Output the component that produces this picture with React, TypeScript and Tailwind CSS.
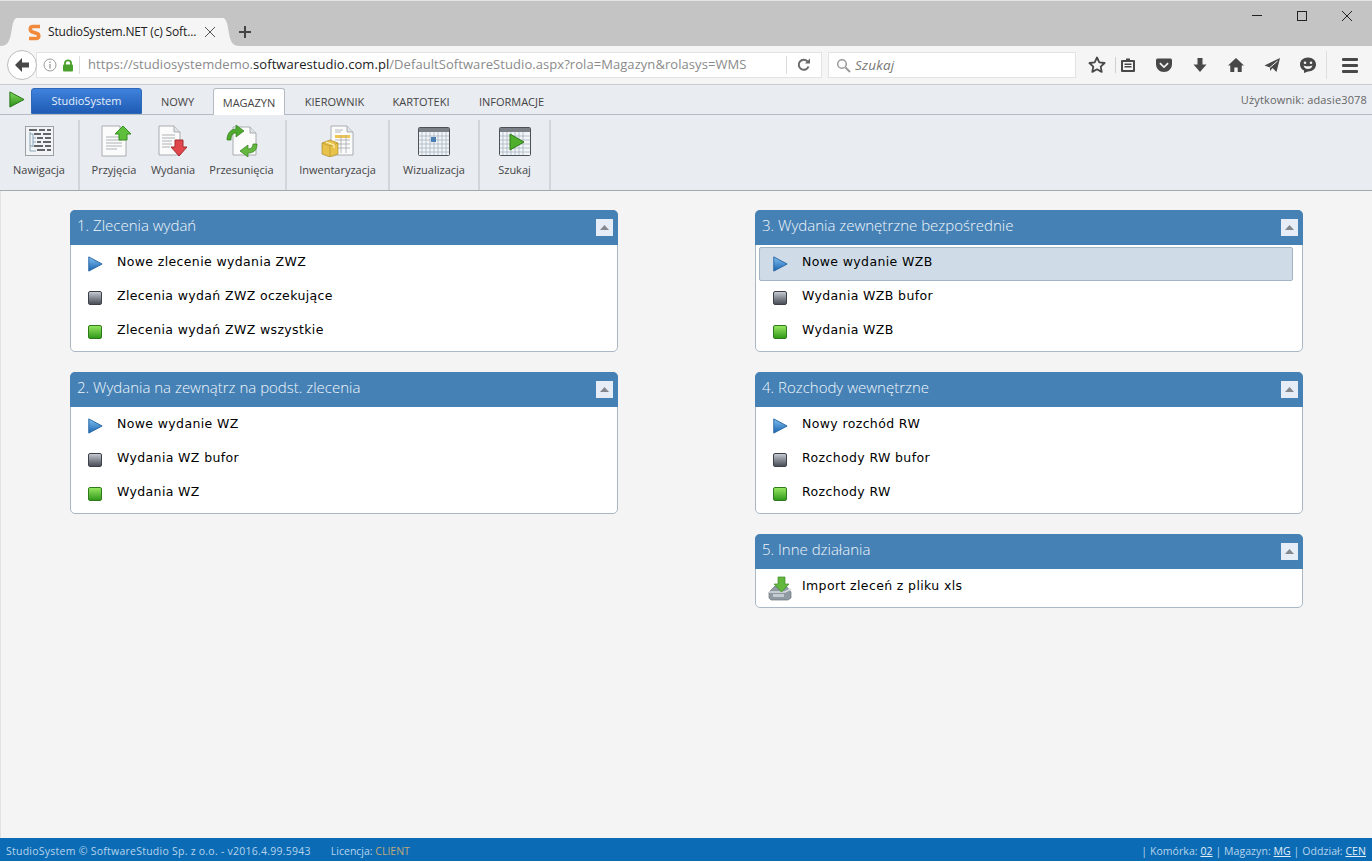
import React, { useId } from "react";

const SEGOE = "font-['Open_Sans','Noto_Sans',sans-serif]";
const VERDANA = "font-['DejaVu_Sans','Liberation_Sans',sans-serif]";

function PlayIcon({ from, to, edge, size = 18 }: { from: string; to: string; edge: string; size?: number }) {
  const id = useId();
  return (
    <svg width={size} height={size} viewBox="0 0 18 18">
      <defs>
        <linearGradient id={id} x1="0" y1="0" x2="0" y2="1">
          <stop offset="0" stopColor={from} />
          <stop offset="1" stopColor={to} />
        </linearGradient>
      </defs>
      <path d="M2 1 17 9 2 17Z" fill={`url(#${id})`} stroke={edge} strokeWidth="1" strokeLinejoin="round" />
    </svg>
  );
}

function ItemIcon({ kind }: { kind: string }) {
  if (kind === "play") return <PlayIcon from="#7fc0f2" to="#1b64ad" edge="#1f5f9f" size={16} />;
  if (kind === "wait") {
    return <div className="w-[14px] h-[14px] rounded-[2px] border border-[#3d4046] bg-gradient-to-b from-[#c5cad2] to-[#4b4f57]" />;
  }
  if (kind === "done") {
    return <div className="w-[14px] h-[14px] rounded-[2px] border border-[#2f7a1a] bg-gradient-to-b from-[#93e65e] to-[#2f9a18]" />;
  }
  return (
    <svg width="26" height="26" viewBox="0 0 26 26">
      <path d="M2 17 8 11H19L24 17V23L21 25H4L2 23Z" fill="#8f9aa3" stroke="#6d767e" strokeWidth=".7" />
      <path d="M2 17H18L24 14" fill="none" stroke="#d8dee2" strokeWidth="1.4" />
      <path d="M6 19H17V22H6Z" fill="#c3cbd1" />
      <path d="M11 2H18V9H22L14.5 17 7 9H11Z" fill="#62b83c" stroke="#3d8a22" strokeWidth=".7" />
    </svg>
  );
}

function Panel({ title, items }: { title: string; items: { label: string; icon: string; active?: boolean }[] }) {
  return (
    <section className="w-[548px] rounded-[5px] border border-[#aab8c6] bg-white">
      <header className={`${SEGOE} h-[35px] -mx-px -mt-px rounded-t-[5px] bg-[#4581b4] pl-[7px] pr-[5px] flex items-center justify-between`}>
        <span className="text-[15px] font-light text-[#f0f6fc] pb-[5px]">{title}</span>
        <button className="w-[17px] h-[17px] bg-[#e7edf6] flex items-center justify-center">
          <svg width="9" height="5" viewBox="0 0 9 5"><path d="M4.5 0 9 5H0Z" fill="#84878c" /></svg>
        </button>
      </header>
      <div className="pt-[2px] pb-[2px]">
        {items.map((item) => (
          <div
            key={item.label}
            className={`h-[34px] flex items-start ml-[3px] mr-[9px] rounded-[2px] border ${
              item.active ? "border-[#a3b4c4] bg-[#cfdce8]" : "border-transparent"
            }`}
          >
            <div className="w-[38px] h-full flex items-center justify-center pl-[1px]">
              <ItemIcon kind={item.icon} />
            </div>
            <span className={`${VERDANA} ml-[4px] text-[12.5px] tracking-[0.37px] text-black leading-[28px]`}>{item.label}</span>
          </div>
        ))}
      </div>
    </section>
  );
}

function SheetBase() {
  return (
    <>
      <path d="M3 1H21L27 7V31H3Z" fill="#fbfbfb" stroke="#a9adb1" />
      <path d="M21 1V7H27" fill="#e0e3e6" stroke="#a9adb1" />
      <path d="M7 12H23M7 15H23M7 18H23M7 21H23M7 24H18" stroke="#a4a8ad" strokeWidth=".9" />
    </>
  );
}

function RibbonIcon({ kind }: { kind: string }) {
  if (kind === "nav") {
    return (
      <svg width="30" height="32" viewBox="-1 0 30 32">
        <rect x=".5" y="1.5" width="28" height="29" fill="#f1f3f4" stroke="#9aa0a5" />
        <path d="M4 5H12M14 5H20M22 5H26M9 9H16M18 9H26M12 13H18M20 13H26M12 17H16M18 17H26M9 21H18M20 21H26M12 25H20M22 25H26" stroke="#33373b" strokeWidth="1.600" />
        <path d="M5 7V26M5 9H8M8 9V22M8 13H11M8 17H11M5 21H8M5 26H11" stroke="#6f94b0" strokeWidth=".8" fill="none" />
      </svg>
    );
  }
  if (kind === "in") {
    return (
      <svg width="34" height="32" viewBox="-2 0 34 32">
        <SheetBase />
        <path d="M24 1 32 9H28V15H20V9H16Z" fill="#5fbf3c" stroke="#358f1e" strokeLinejoin="round" />
      </svg>
    );
  }
  if (kind === "out") {
    return (
      <svg width="30" height="32" viewBox="0 0 30 32">
        <path d="M1 1H16L22 7V30H1Z" fill="#fbfbfb" stroke="#a9adb1" />
        <path d="M16 1V7H22" fill="#e0e3e6" stroke="#a9adb1" />
        <path d="M4 10H17M4 13H17M4 16H14M4 19H14M4 22H12" stroke="#a4a8ad" strokeWidth=".9" />
        <path d="M17 15H25V22H29L21 31 13 22H17Z" fill="#e0474c" stroke="#a82a2e" strokeLinejoin="round" />
      </svg>
    );
  }
  if (kind === "move") {
    return (
      <svg width="32" height="32" viewBox="0 0 32 32">
        <path d="M7 2H24L30 8V30H7Z" fill="#fbfbfb" stroke="#a9adb1" />
        <path d="M24 2V8H30" fill="#e0e3e6" stroke="#a9adb1" />
        <path d="M1 15C1 8 5 4 10 4V0L18 6 10 12V8C7 8 5 10 5 15Z" fill="#4fa92e" stroke="#2f7d1a" strokeWidth=".7" />
        <path d="M31 19C31 26 27 28 22 28V32L14 26 22 20V24C25 24 27 22 27 19Z" fill="#64b83f" stroke="#2f7d1a" strokeWidth=".7" />
      </svg>
    );
  }
  if (kind === "stock") {
    return (
      <svg width="34" height="32" viewBox="0 0 34 32">
        <path d="M10 1H26L32 7V30H10Z" fill="#fbfbfb" stroke="#a9adb1" />
        <path d="M26 1V7H32" fill="#e0e3e6" stroke="#a9adb1" />
        <rect x="14" y="10" width="15" height="3" fill="#f0c64f" />
        <path d="M14 15H29M14 19H29M14 23H29M20 10V28M25 10V28M14 5H22M14 7H20" stroke="#a4a8ad" strokeWidth=".8" />
        <path d="M1 18 9 15 17 18V29L9 32 1 29Z" fill="#e8c24a" stroke="#a8892a" strokeWidth=".7" />
        <path d="M1 18 9 21 17 18M9 21V32" fill="none" stroke="#b89a3a" strokeWidth=".8" />
        <path d="M5 17 13 20V23" fill="none" stroke="#fff2b8" strokeWidth="1.2" />
      </svg>
    );
  }
  const isGrid = kind === "grid";
  const cols = isGrid ? 7 : 6;
  return (
    <svg width="32" height="29" viewBox="0 0 32 29" className="mt-[2px]">
      <rect x=".5" y=".5" width="31" height="28" rx="1" fill="#f2f5f7" stroke="#4c5257" />
      <rect x="1" y="1" width="30" height="4" fill="#7a8086" />
      {Array.from({ length: cols }, (_, i) => (
        <path key={`v${i}`} d={`M${4 + i * 4} 5V28`} stroke="#a7b4c0" strokeWidth=".8" />
      ))}
      {[9, 13, 17, 21, 25].map((y) => (
        <path key={y} d={`M1 ${y}H31`} stroke="#a7b4c0" strokeWidth=".8" />
      ))}
      {isGrid ? (
        <rect x="13" y="10" width="5" height="5" fill="#4a7fb5" />
      ) : (
        <path d="M11 7 25 15 11 23Z" fill="#4fae2e" stroke="#2d7a17" strokeLinejoin="round" />
      )}
    </svg>
  );
}

function RibbonItem({ label, icon, width }: { label: string; icon: string; width: string }) {
  return (
    <div className={`${width} h-full flex flex-col items-center`}>
      <div className="h-[37px] pt-[5px] flex items-start justify-center">
        <RibbonIcon kind={icon} />
      </div>
      <span className="mt-[5px] text-[11px] leading-[15px] text-[#454545] whitespace-nowrap">{label}</span>
    </div>
  );
}

function Divider() {
  return <div className="w-[2px] h-full bg-[#d2d5d9]" />;
}

function ToolIcon({ children, w = 20 }: { children: React.ReactNode; w?: number }) {
  return (
    <svg width={w} height="20" viewBox="0 0 20 20" fill="#484848">
      {children}
    </svg>
  );
}

export default function App() {
  return (
    <div className={`${SEGOE} w-[1372px] h-[862px] overflow-hidden flex flex-col bg-white`}>
      {/* Title bar and tab */}
      <div className="h-[46px] shrink-0 bg-[#c4c4c4] border-t border-[#e4e4e4] flex items-end relative">
        <svg width="17" height="28" viewBox="0 0 17 28" className="shrink-0">
          <path d="M0 28C9 28 10 22 12 10 13 3 15 0 17 0V28Z" fill="#f5f5f5" />
        </svg>
        <div className="w-[206px] h-[28px] bg-[#f5f5f5] flex items-center pl-[11px] relative">
          <svg width="13" height="17" viewBox="0 0 13 17">
            <path d="M12 2.500H5C1.500 2.500 1.500 7 4.500 8L9 9.500C11.500 10.500 11.500 14.500 8 14.500H1" fill="none" stroke="#f08a3c" strokeWidth="3.600" />
          </svg>
          <span className="ml-[7px] text-[12px] text-[#222] tracking-[-0.15px] whitespace-nowrap">StudioSystem.NET (c) Soft...</span>
          <svg width="12" height="12" viewBox="0 0 12 12" className="ml-auto mr-[7px]">
            <path d="M1 1 11 11M11 1 1 11" stroke="#555" strokeWidth="1" />
          </svg>
        </div>
        <svg width="17" height="28" viewBox="0 0 17 28" className="shrink-0 -scale-x-100">
          <path d="M0 28C9 28 10 22 12 10 13 3 15 0 17 0V28Z" fill="#f5f5f5" />
        </svg>
        <svg width="14" height="14" viewBox="0 0 14 14" className="ml-[-2px] mb-[7px]">
          <path d="M7 1V13M1 7H13" stroke="#444" strokeWidth="2" />
        </svg>
        <div className="absolute right-[3px] top-0 w-[135px] h-[30px] flex">
          <div className="w-[45px] flex items-center justify-center pb-[1px]">
            <div className="w-[10px] h-px bg-[#222]" />
          </div>
          <div className="w-[45px] flex items-center justify-center">
            <div className="w-[10px] h-[10px] border border-[#222]" />
          </div>
          <div className="w-[45px] flex items-center justify-center">
            <svg width="10" height="10" viewBox="0 0 10 10"><path d="M0 0 10 10M10 0 0 10" stroke="#222" /></svg>
          </div>
        </div>
      </div>

      {/* Navigation bar */}
      <div className="h-[39px] shrink-0 bg-[#f5f5f5] border-b border-[#c9cbcd] flex items-center pl-[7px] relative">
        <div className="w-[30px] h-[30px] rounded-full border border-[#bdbdbd] bg-white flex items-center justify-center z-10 shrink-0">
          <svg width="15" height="14" viewBox="0 0 15 14"><path d="M7 0 0 7 7 14V9.500H14V4.500H7Z" fill="#474747" /></svg>
        </div>
        <div className="h-[26px] w-[786px] -ml-px bg-white border border-[#e3e3e3] flex items-center shrink-0">
          <svg width="14" height="14" viewBox="0 0 14 14" className="ml-[6px]">
            <circle cx="7" cy="7" r="6" fill="none" stroke="#9a9a9a" />
            <path d="M7 6V10.500M7 3.500V5" stroke="#9a9a9a" strokeWidth="1.300" />
          </svg>
          <svg width="12" height="13" viewBox="0 0 12 13" className="ml-[5px]">
            <path d="M3 6V4C3 .5 9 .5 9 4V6" fill="none" stroke="#4aa02c" strokeWidth="1.800" />
            <rect x="1" y="5.500" width="10" height="7" rx="1" fill="#4aa02c" />
          </svg>
          <div className="w-px h-[18px] bg-[#dcdcdc] ml-[5px]" />
          <span className="ml-[8px] text-[13px] text-[#8a8a8a] tracking-[0.06px] whitespace-nowrap">
            https://studiosystemdemo.<span className="text-[#1a1a1a]">softwarestudio.com.pl</span>/DefaultSoftwareStudio.aspx?rola=Magazyn&amp;rolasys=WMS
          </span>
          <div className="ml-auto w-px h-[18px] bg-[#dcdcdc]" />
          <div className="w-[34px] flex justify-center">
            <svg width="14" height="14" viewBox="0 0 14 14">
              <path d="M11.500 8.500A5 5 0 1 1 10.500 3.500" fill="none" stroke="#6a6a6a" strokeWidth="2" />
              <path d="M8 5.500H13V.5Z" fill="#6a6a6a" />
            </svg>
          </div>
        </div>
        <div className="ml-[6px] h-[26px] w-[248px] bg-white border border-[#e3e3e3] flex items-center pl-[7px] shrink-0">
          <svg width="15" height="15" viewBox="0 0 15 15">
            <circle cx="6" cy="6" r="4.300" fill="none" stroke="#9a9a9a" strokeWidth="1.500" />
            <path d="M9.500 9.500 14 14" stroke="#9a9a9a" strokeWidth="2" />
          </svg>
          <span className="ml-[4px] text-[13.5px] italic text-[#777] tracking-[0.2px]">Szukaj</span>
        </div>

        <div className="flex items-center ml-[11px]">
          <ToolIcon>
            <path d="M10 2.500 12.300 7.400 17.600 8 13.700 11.600 14.700 16.900 10 14.300 5.300 16.900 6.300 11.600 2.400 8 7.700 7.400Z" fill="none" stroke="#484848" strokeWidth="1.800" strokeLinejoin="round" />
          </ToolIcon>
          <div className="w-px h-[16px] bg-[#d0d0d0] ml-[8px] mr-[5px]" />
          <div className="-ml-[3px] flex items-center">
            <ToolIcon>
              <path fillRule="evenodd" d="M4 5H8V3.500H12V5H16A1 1 0 0 1 17 6V16A1 1 0 0 1 16 17H4A1 1 0 0 1 3 16V6A1 1 0 0 1 4 5ZM5 7V15H15V7ZM6.500 8.500H13.500V10H6.500ZM6.500 11H13.500V12.500H6.500Z" />
            </ToolIcon>
          </div>
          <div className="ml-[16px]">
            <ToolIcon>
              <path fillRule="evenodd" d="M3.500 3.500H16.500A1.500 1.500 0 0 1 18 5V9C18 13.500 14.500 17 10 17S2 13.500 2 9V5A1.500 1.500 0 0 1 3.500 3.500ZM6.500 7.500 5.300 8.700 10 13.300 14.700 8.700 13.500 7.500 10 11Z" />
            </ToolIcon>
          </div>
          <div className="ml-[16px]">
            <ToolIcon>
              <path d="M7.500 3H12.500V9.500H16.500L10 17 3.500 9.500H7.500Z" />
            </ToolIcon>
          </div>
          <div className="ml-[16px]">
            <ToolIcon>
              <path d="M10 3 18 10.500H15.700V17H11.700V12.500H8.300V17H4.300V10.500H2Z" />
            </ToolIcon>
          </div>
          <div className="ml-[16px]">
            <ToolIcon>
              <path d="M18 3 14.500 17 10.500 13 8 16V12.500L2.500 10.500Z" />
              <path d="M8 12.500 15.500 6" stroke="#f5f5f5" strokeWidth="1" fill="none" />
            </ToolIcon>
          </div>
          <div className="ml-[16px]">
            <ToolIcon>
              <path fillRule="evenodd" d="M10 2.500C14.700 2.500 18 5.500 18 9.500S14.700 16.500 10 16.500L6 18V15.500C3.500 14.300 2 12 2 9.500 2 5.500 5.300 2.500 10 2.500ZM7 6.500A1.300 1.300 0 1 0 7 9.100 1.300 1.300 0 0 0 7 6.500ZM13 6.500A1.300 1.300 0 1 0 13 9.100 1.300 1.300 0 0 0 13 6.500ZM5.500 10.500C6 13 8 14 10 14S14 13 14.500 10.500C13 11.500 7 11.500 5.500 10.500Z" />
            </ToolIcon>
          </div>
          <div className="w-px h-[28px] bg-[#dedede] ml-[8px]" />
          <div className="ml-[15px] flex flex-col gap-[3px]">
            <div className="w-[16px] h-[3px] rounded-[1px] bg-[#484848]" />
            <div className="w-[16px] h-[3px] rounded-[1px] bg-[#484848]" />
            <div className="w-[16px] h-[3px] rounded-[1px] bg-[#484848]" />
          </div>
        </div>
      </div>

      {/* Tab row */}
      <div className="h-[30px] shrink-0 bg-[#e9ecf1] border-b border-[#b4bbc4] flex items-end relative text-[11px] text-[#444]">
        <div className="w-[31px] h-full flex items-center pl-[8px]">
          <PlayIcon from="#82d85a" to="#2c8f18" edge="#1f6f12" size={17} />
        </div>
        <div className="w-[111px] h-[26px] pt-[1px] rounded-t-[3px] border border-[#2e68b8] bg-gradient-to-b from-[#3f82dc] to-[#1f5cb4] text-[#e6f0fb] flex items-center justify-center">StudioSystem</div>
        <div className="w-[71px] h-[26px] pt-[2px] flex items-center justify-center">NOWY</div>
        <div className="w-[72px] h-[27px] pt-[2px] -mb-px rounded-t-[3px] border border-b-0 border-[#b4bbc4] bg-white flex items-center justify-center">MAGAZYN</div>
        <div className="w-[99px] h-[26px] pt-[2px] flex items-center justify-center">KIEROWNIK</div>
        <div className="w-[74px] h-[26px] pt-[2px] flex items-center justify-center">KARTOTEKI</div>
        <div className="w-[107px] h-[26px] pt-[2px] flex items-center justify-center">INFORMACJE</div>
        <span className="ml-auto mr-[5px] mb-[6px] text-[#666] text-[11px] tracking-[0.15px]">Użytkownik: adasie3078</span>
      </div>

      {/* Ribbon */}
      <div className="h-[76px] shrink-0 bg-[#e9ecf1] border-b border-[#a3a8ae] flex pt-[5px]">
        <RibbonItem label="Nawigacja" icon="nav" width="w-[78px]" />
        <Divider />
        <div className="w-[4px]" />
        <RibbonItem label="Przyjęcia" icon="in" width="w-[60px]" />
        <RibbonItem label="Wydania" icon="out" width="w-[58px]" />
        <RibbonItem label="Przesunięcia" icon="move" width="w-[79px]" />
        <div className="w-[4px]" />
        <Divider />
        <RibbonItem label="Inwentaryzacja" icon="stock" width="w-[101px]" />
        <Divider />
        <RibbonItem label="Wizualizacja" icon="grid" width="w-[88px]" />
        <Divider />
        <RibbonItem label="Szukaj" icon="search" width="w-[69px]" />
        <Divider />
      </div>

      {/* Content */}
      <main className="flex-1 bg-[#f4f4f4] border-l border-[#e2e2e2] pl-[69px] pt-[19px] flex gap-[137px]">
        <div className="flex flex-col gap-[20px]">
          <Panel
            title="1. Zlecenia wydań"
            items={[
              { label: "Nowe zlecenie wydania ZWZ", icon: "play" },
              { label: "Zlecenia wydań ZWZ oczekujące", icon: "wait" },
              { label: "Zlecenia wydań ZWZ wszystkie", icon: "done" },
            ]}
          />
          <Panel
            title="2. Wydania na zewnątrz na podst. zlecenia"
            items={[
              { label: "Nowe wydanie WZ", icon: "play" },
              { label: "Wydania WZ bufor", icon: "wait" },
              { label: "Wydania WZ", icon: "done" },
            ]}
          />
        </div>
        <div className="flex flex-col gap-[20px]">
          <Panel
            title="3. Wydania zewnętrzne bezpośrednie"
            items={[
              { label: "Nowe wydanie WZB", icon: "play", active: true },
              { label: "Wydania WZB bufor", icon: "wait" },
              { label: "Wydania WZB", icon: "done" },
            ]}
          />
          <Panel
            title="4. Rozchody wewnętrzne"
            items={[
              { label: "Nowy rozchód RW", icon: "play" },
              { label: "Rozchody RW bufor", icon: "wait" },
              { label: "Rozchody RW", icon: "done" },
            ]}
          />
          <Panel title="5. Inne działania" items={[{ label: "Import zleceń z pliku xls", icon: "import" }]} />
        </div>
      </main>

      {/* Footer */}
      <footer className="h-[23px] shrink-0 mb-px pt-[5px] bg-[#0b6cb5] flex items-center pl-[6px] pr-[6px] text-[10.5px] text-[#b7d3ec] whitespace-nowrap">
        <span className="tracking-[0.25px]">StudioSystem © SoftwareStudio Sp. z o.o. - v2016.4.99.5943</span>
        <span className="ml-[20px]">Licencja: <span className="text-[#c3a878]">CLIENT</span></span>
        <span className="ml-auto tracking-[0.07px]">
          | Komórka: <span className="underline text-[#e2eef8]">02</span> | Magazyn: <span className="underline text-[#e2eef8]">MG</span> | Oddział: <span className="underline text-[#e2eef8]">CEN</span>
        </span>
      </footer>
    </div>
  );
}
